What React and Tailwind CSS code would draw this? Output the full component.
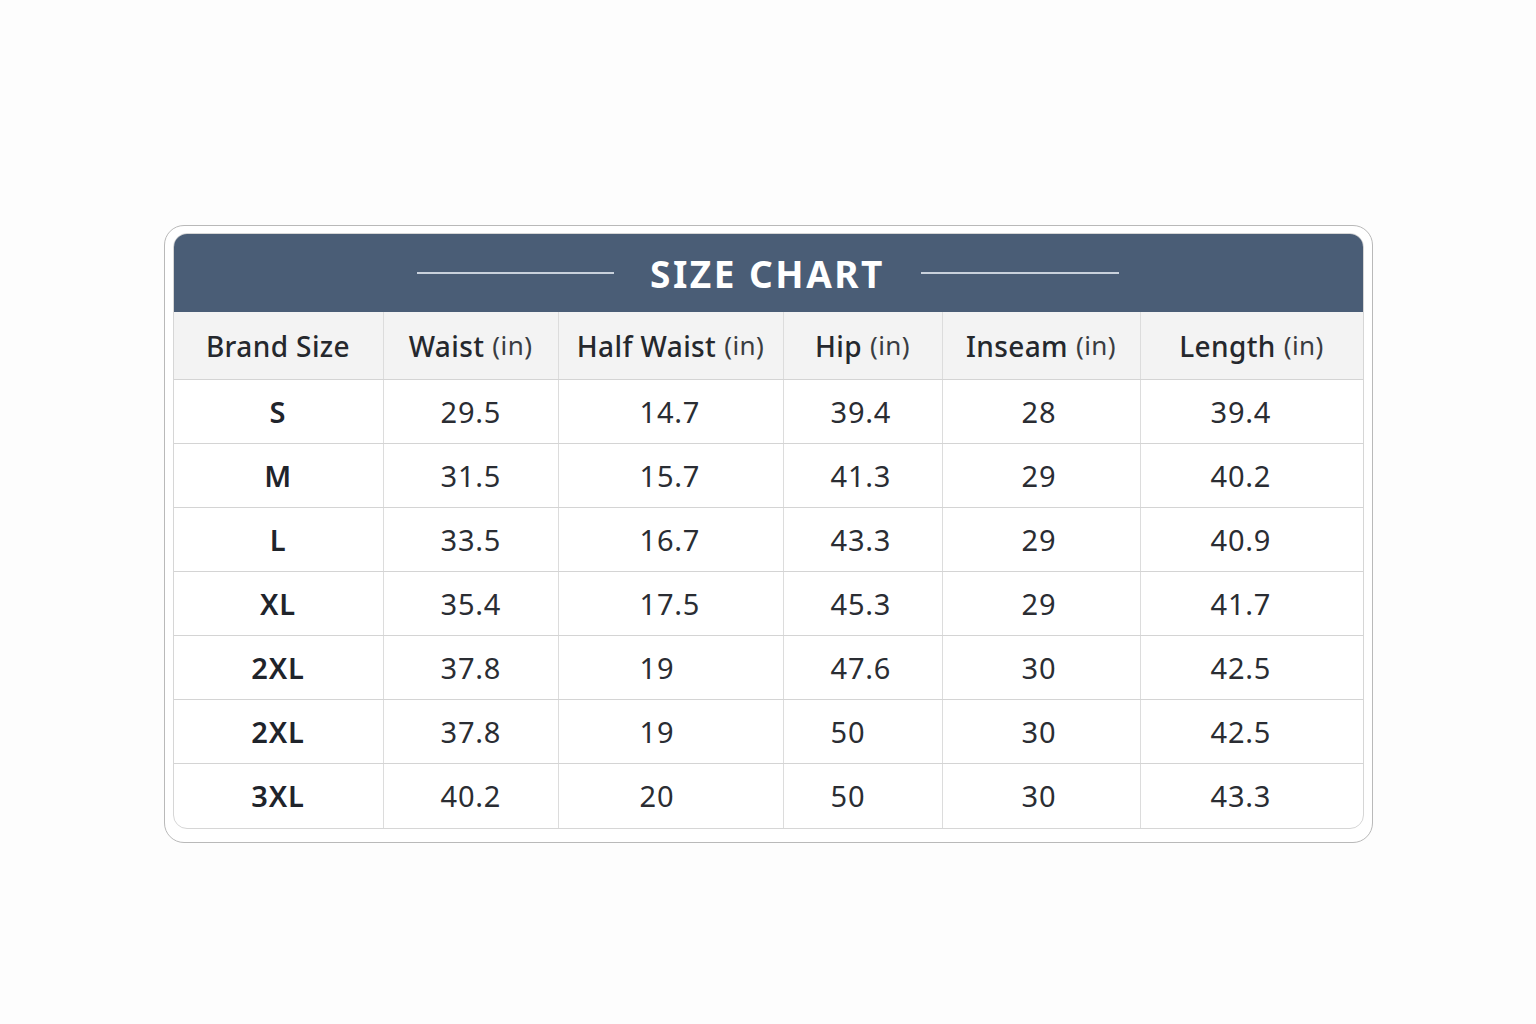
import React from 'react';

const columns = [
  { label: 'Brand Size', unit: '', pad: '' },
  { label: 'Waist', unit: '(in)', pad: 'pl-[57px]' },
  { label: 'Half Waist', unit: '(in)', pad: 'pl-[81px]' },
  { label: 'Hip', unit: '(in)', pad: 'pl-[47px]' },
  { label: 'Inseam', unit: '(in)', pad: 'pl-[79px]' },
  { label: 'Length', unit: '(in)', pad: 'pl-[70px]' },
];

const rows = [
  ['S', '29.5', '14.7', '39.4', '28', '39.4'],
  ['M', '31.5', '15.7', '41.3', '29', '40.2'],
  ['L', '33.5', '16.7', '43.3', '29', '40.9'],
  ['XL', '35.4', '17.5', '45.3', '29', '41.7'],
  ['2XL', '37.8', '19', '47.6', '30', '42.5'],
  ['2XL', '37.8', '19', '50', '30', '42.5'],
  ['3XL', '40.2', '20', '50', '30', '43.3'],
];

const grid = 'grid grid-cols-[210px_175px_225px_159px_198px_222px]';

export default function App() {
  return (
    <div className="min-h-screen w-full bg-[#fdfdfd] flex justify-center pt-[225px] font-['Noto_Sans',sans-serif] text-[#262a30]">
      <div className="w-[1209px] h-[618px] rounded-[20px] border border-[#b9b9b9] bg-white px-[8px] pt-[7px]">
        <div className="rounded-[14px] border border-[#d6d6d6] overflow-hidden bg-white">
          {/* title bar */}
          <div className="h-[78px] bg-[#4a5d76] flex items-center justify-center gap-[36px]">
            <div className="w-[197px] h-[1.5px] bg-[#c9d1dc]" />
            <h1 className="text-[37px] font-bold text-white tracking-[2.5px] leading-none">SIZE CHART</h1>
            <div className="w-[198px] h-[1.5px] bg-[#c9d1dc]" />
          </div>

          {/* column headers */}
          <div className={`${grid} h-[68px] bg-[#f3f3f3] border-b border-[#d4d4d4]`}>
            {columns.map((c, i) => (
              <div
                key={i}
                className={`flex items-center justify-center text-[28px] tracking-[0.4px] ${i < 5 ? 'border-r border-[#dcdcdc]' : ''}`}
              >
                <span className="font-medium text-[#25282d]">{c.label}</span>
                {c.unit && <span className="ml-[8px] font-normal text-[26px] text-[#3a3d42]">{c.unit}</span>}
              </div>
            ))}
          </div>

          {/* data rows */}
          {rows.map((r, ri) => (
            <div
              key={ri}
              className={`${grid} h-[64px] ${ri < rows.length - 1 ? 'border-b border-[#d4d4d4]' : ''}`}
            >
              {r.map((v, ci) => (
                <div
                  key={ci}
                  className={`flex items-center text-[29px] tracking-[0.8px] ${ci < 5 ? 'border-r border-[#dcdcdc]' : ''} ${
                    ci === 0 ? 'justify-center font-semibold text-[#1f242b]' : `${columns[ci].pad} font-normal text-[#2a2d33]`
                  }`}
                >
                  {v}
                </div>
              ))}
            </div>
          ))}
        </div>
      </div>
    </div>
  );
}
